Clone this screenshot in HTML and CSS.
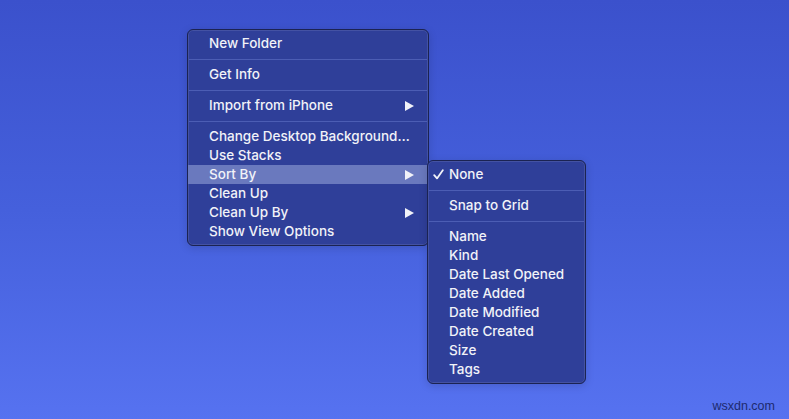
FILE: index.html
```html
<!DOCTYPE html>
<html>
<head>
<meta charset="utf-8">
<link rel="stylesheet" href="styles.css">
</head>
<body>
<div class="desktop">
  <div class="menu main-menu">
    <div class="item">New Folder</div>
    <div class="sep"></div>
    <div class="item">Get Info</div>
    <div class="sep"></div>
    <div class="item has-sub">Import from iPhone<span class="arrow"></span></div>
    <div class="sep"></div>
    <div class="item">Change Desktop Background…</div>
    <div class="item">Use Stacks</div>
    <div class="item has-sub active">Sort By<span class="arrow"></span></div>
    <div class="item">Clean Up</div>
    <div class="item has-sub">Clean Up By<span class="arrow"></span></div>
    <div class="item">Show View Options</div>
  </div>
  <div class="menu sub-menu">
    <div class="item checked"><svg class="check" width="11" height="11" viewBox="0 0 11 11"><path d="M1.2 6.2 L4 9.4 L9.8 1.2" fill="none" stroke="#f2f3f8" stroke-width="1.8" stroke-linecap="round" stroke-linejoin="round"/></svg>None</div>
    <div class="sep"></div>
    <div class="item">Snap to Grid</div>
    <div class="sep"></div>
    <div class="item">Name</div>
    <div class="item">Kind</div>
    <div class="item">Date Last Opened</div>
    <div class="item">Date Added</div>
    <div class="item">Date Modified</div>
    <div class="item">Date Created</div>
    <div class="item">Size</div>
    <div class="item">Tags</div>
  </div>
  <div class="watermark">wsxdn.com</div>
</div>
</body>
</html>
```

FILE: styles.css
```css
html, body {
  margin: 0;
  padding: 0;
}
body {
  width: 789px;
  height: 419px;
  overflow: hidden;
  font-family: "Inter", "Noto Sans", sans-serif;
}
.desktop {
  position: relative;
  width: 789px;
  height: 419px;
  background: linear-gradient(180deg, #3b51cc 0%, #4560dc 50%, #5672f0 100%);
}
.menu {
  position: absolute;
  box-sizing: border-box;
  background: #2f3f99;
  border: 1px solid #1b2352;
  border-radius: 6px;
  box-shadow: inset 0 0 0 1px rgba(255,255,255,0.10), 0 2px 8px rgba(0,0,0,0.15);
  padding: 4px 0 4px;
  color: #f1f2f8;
  font-size: 13.5px;
  font-weight: 500;
  letter-spacing: 0;
}
.main-menu {
  left: 187px;
  top: 29px;
  width: 242px;
  height: 217px;
}
.sub-menu {
  left: 427px;
  top: 160px;
  width: 159px;
  height: 224px;
}
.item {
  position: relative;
  height: 19px;
  line-height: 19px;
  padding-left: 21px;
  white-space: nowrap;
}
.item.active {
  background: #6a79be;
}
.sep {
  height: 1px;
  margin: 6px 1px 5px;
  background: #4c5db4;
}
.arrow {
  position: absolute;
  right: 14px;
  top: 5px;
  width: 0;
  height: 0;
  border-top: 5px solid transparent;
  border-bottom: 5px solid transparent;
  border-left: 9px solid #f1f2f8;
}
.check {
  position: absolute;
  left: 5px;
  top: 4px;
}
.watermark {
  position: absolute;
  right: 14px;
  bottom: 6px;
  font-family: "Liberation Sans", Arial, sans-serif;
  font-size: 12.5px;
  color: #1d2a6e;
}
```
